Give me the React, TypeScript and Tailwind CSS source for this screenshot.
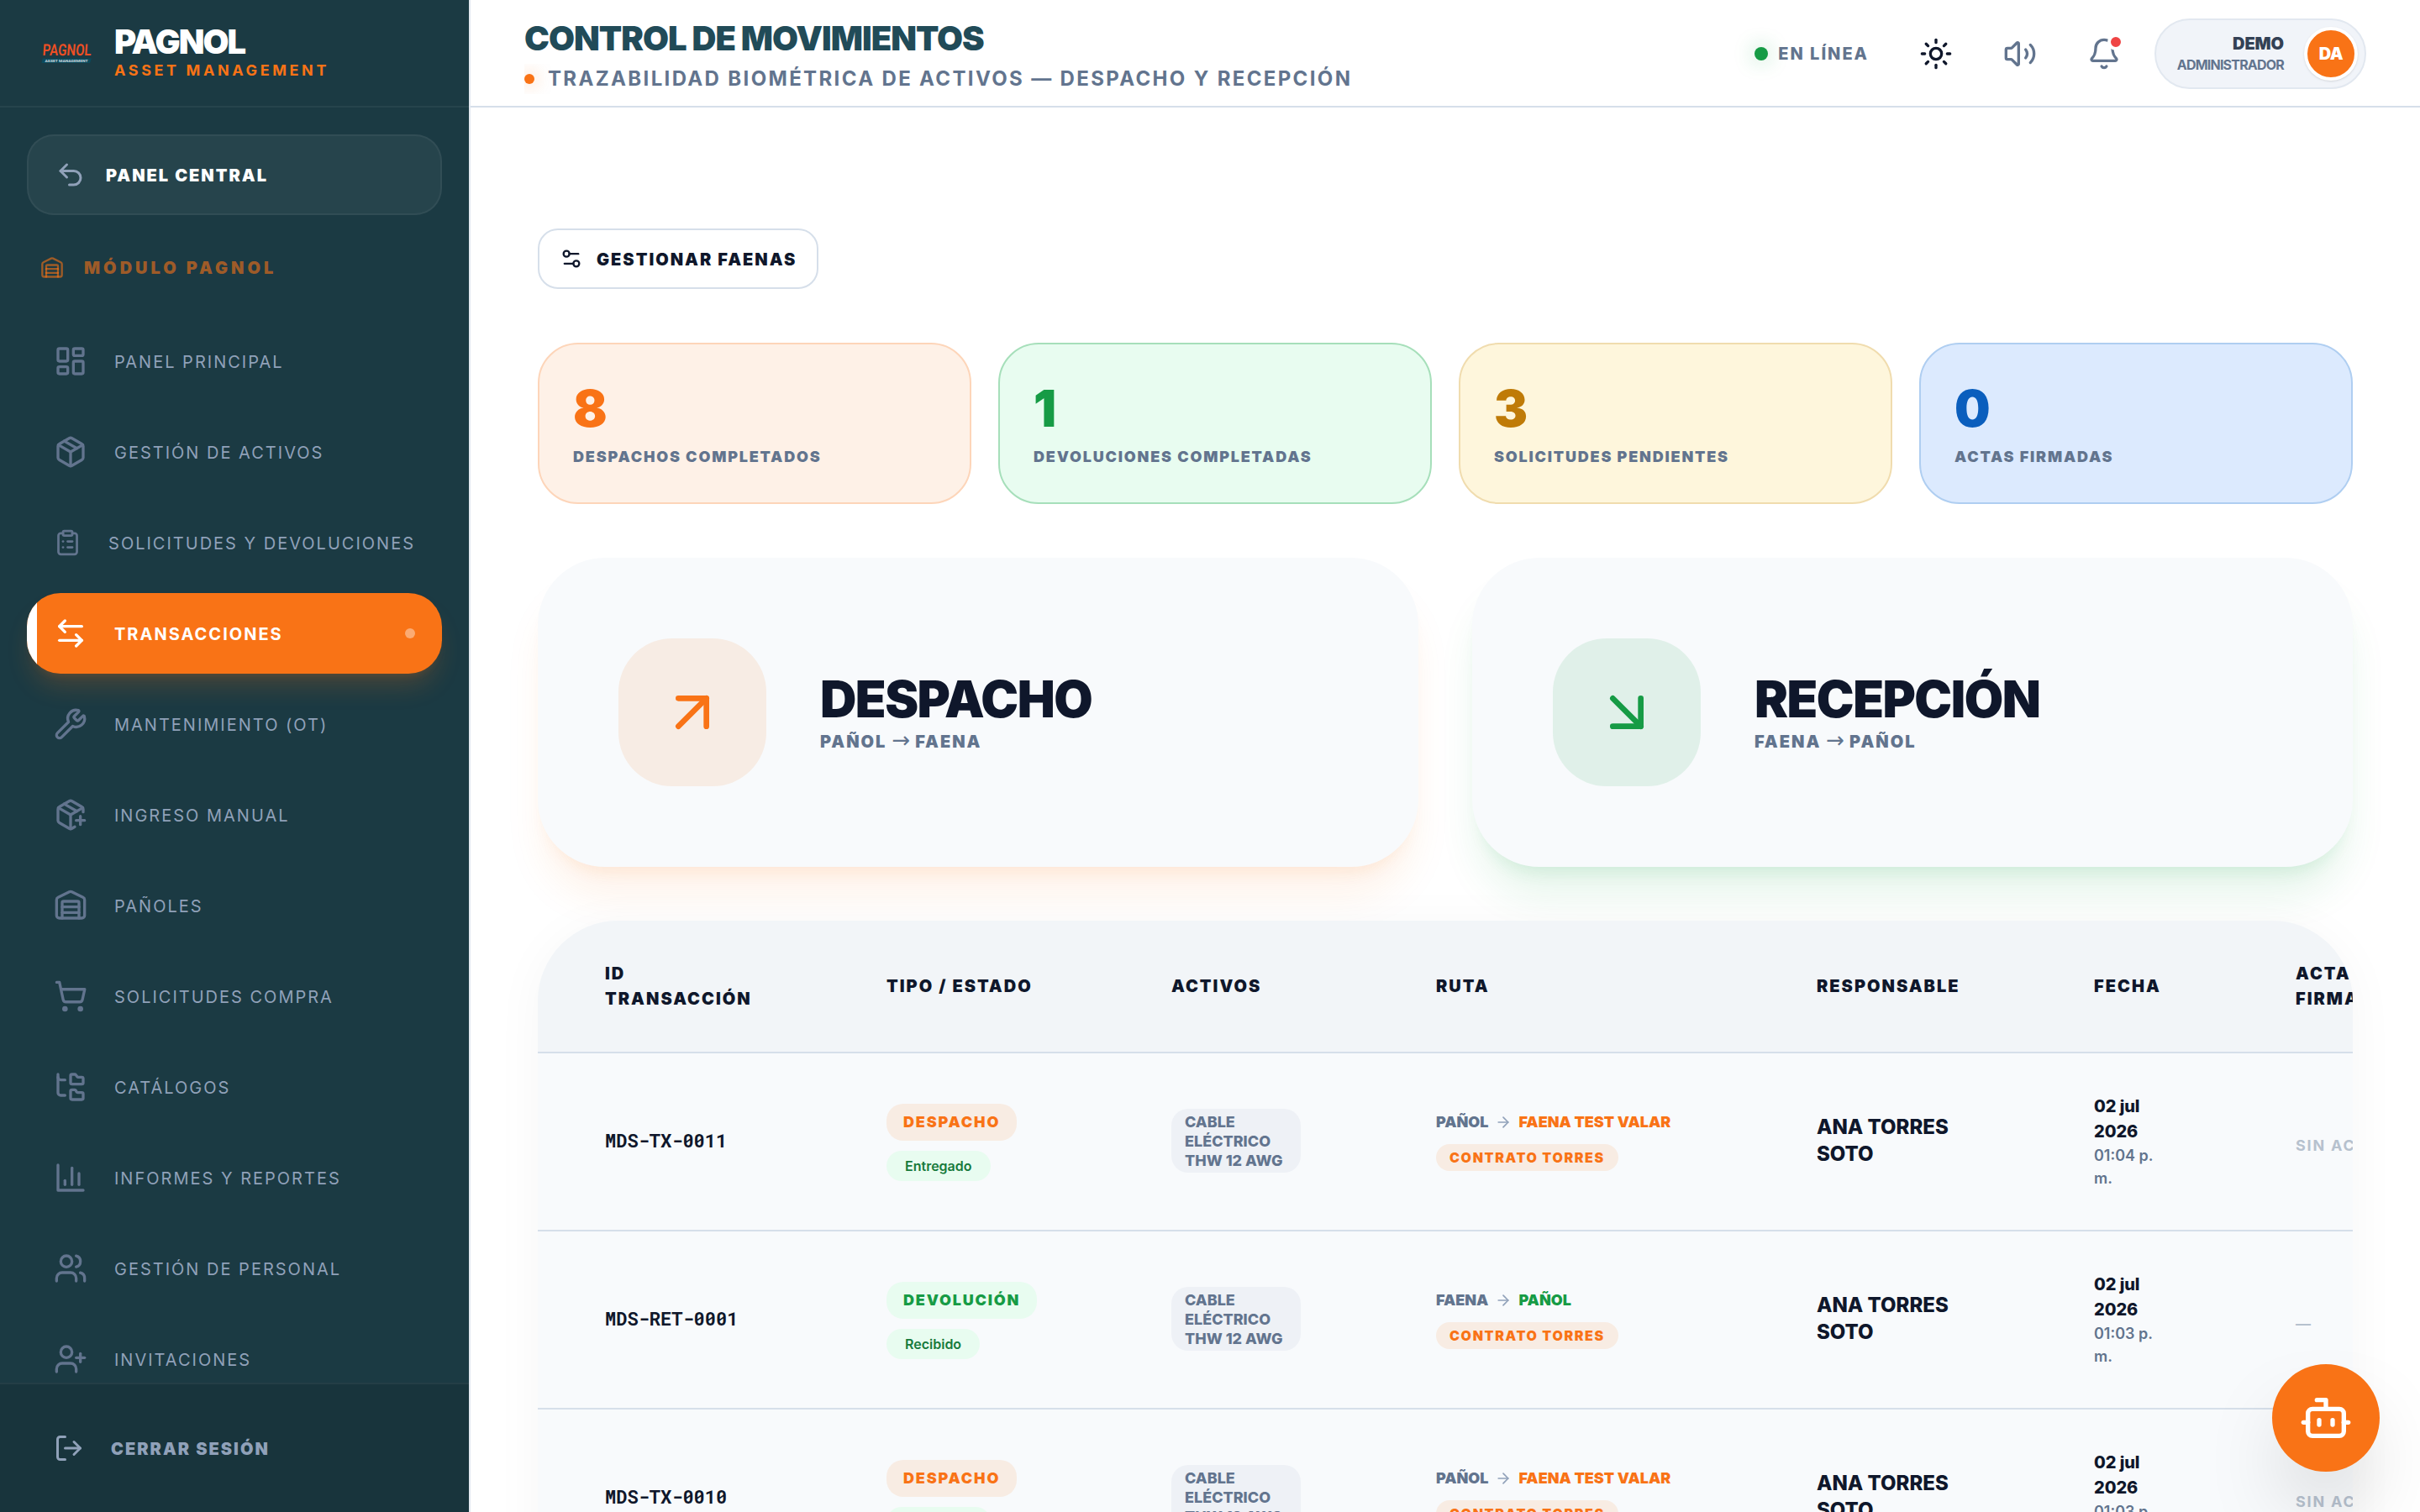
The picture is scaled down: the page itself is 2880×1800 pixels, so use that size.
import type { ComponentType, ReactNode } from 'react';
import {
  ArrowDownRight,
  ArrowRight,
  ArrowUpRight,
  Bell,
  Bot,
  ClipboardList,
  FolderTree,
  LayoutDashboard,
  LogOut,
  Package,
  PackagePlus,
  Settings2,
  ShoppingCart,
  Sun,
  Undo2,
  UserPlus,
  Users,
  Volume2,
  Warehouse,
  Wrench,
} from 'lucide-react';

type IconType = ComponentType<{ className?: string }>;

function BarsIcon({ className }: { className?: string }) {
  return (
    <svg
      viewBox="0 0 24 24"
      fill="none"
      stroke="currentColor"
      strokeWidth={2}
      strokeLinecap="round"
      strokeLinejoin="round"
      className={className}
    >
      <path d="M3 3v18h18" />
      <path d="M18 17V9" />
      <path d="M13 17V5" />
      <path d="M8 17v-3" />
    </svg>
  );
}

function SwapIcon({ className }: { className?: string }) {
  return (
    <svg
      viewBox="0 0 24 24"
      fill="none"
      stroke="currentColor"
      strokeWidth={2}
      strokeLinecap="round"
      strokeLinejoin="round"
      className={className}
    >
      <path d="M8 3 4 7l4 4" />
      <path d="M4 7h16" />
      <path d="m16 21 4-4-4-4" />
      <path d="M20 17H4" />
    </svg>
  );
}

function Logo() {
  return (
    <svg viewBox="0 0 64 32" className="h-8 w-16">
      <text
        x="2.5"
        y="18.5"
        textLength="58"
        lengthAdjust="spacingAndGlyphs"
        transform="skewX(-4) translate(1 0)"
        className="fill-[#ee4f24] font-['Roboto'] text-[19px] font-semibold"
      >
        PAGNOL
      </text>
      <path d="M2.5 21.5H61l-2 5.5H1.5z" className="fill-[#0b4a5c]" />
      <text
        x="5.5"
        y="25.8"
        textLength="51"
        lengthAdjust="spacingAndGlyphs"
        className="fill-[#cfdde1] font-['Roboto'] text-[4.4px] font-bold"
      >
        ASSET MANAGEMENT
      </text>
    </svg>
  );
}

const navItems: { label: string; icon: IconType; active?: boolean }[] = [
  { label: 'PANEL PRINCIPAL', icon: LayoutDashboard },
  { label: 'GESTIÓN DE ACTIVOS', icon: Package },
  { label: 'SOLICITUDES Y DEVOLUCIONES', icon: ClipboardList },
  { label: 'TRANSACCIONES', icon: SwapIcon, active: true },
  { label: 'MANTENIMIENTO (OT)', icon: Wrench },
  { label: 'INGRESO MANUAL', icon: PackagePlus },
  { label: 'PAÑOLES', icon: Warehouse },
  { label: 'SOLICITUDES COMPRA', icon: ShoppingCart },
  { label: 'CATÁLOGOS', icon: FolderTree },
  { label: 'INFORMES Y REPORTES', icon: BarsIcon },
  { label: 'GESTIÓN DE PERSONAL', icon: Users },
  { label: 'INVITACIONES', icon: UserPlus },
];

const stats = [
  { value: 8, label: 'DESPACHOS COMPLETADOS', box: 'bg-[#fef1e7] border-[#fdd5b9]', text: 'text-[#f97316]' },
  { value: 1, label: 'DEVOLUCIONES COMPLETADAS', box: 'bg-[#e8fcf0] border-[#a6dfba]', text: 'text-[#169b45]' },
  { value: 3, label: 'SOLICITUDES PENDIENTES', box: 'bg-[#fef6dc] border-[#f0dcae]', text: 'text-[#bf7b08]' },
  { value: 0, label: 'ACTAS FIRMADAS', box: 'bg-[#dceafe] border-[#afcef1]', text: 'text-[#0a5ebd]' },
];

const headers = [
  { label: 'ID TRANSACCIÓN', width: 'w-[335px]' },
  { label: 'TIPO / ESTADO', width: 'w-[339px]' },
  { label: 'ACTIVOS', width: 'w-[315px]' },
  { label: 'RUTA', width: 'w-[453px]' },
  { label: 'RESPONSABLE', width: 'w-[330px]' },
  { label: 'FECHA', width: 'w-[240px]' },
  { label: 'ACTA FIRMADA', width: 'w-[280px]' },
];

const rows = [
  { id: 'MDS-TX-0011', type: 'DESPACHO', state: 'Entregado', time: '01:04 p. m.', acta: 'SIN ACTA' },
  { id: 'MDS-RET-0001', type: 'DEVOLUCIÓN', state: 'Recibido', time: '01:03 p. m.', acta: '—' },
  { id: 'MDS-TX-0010', type: 'DESPACHO', state: 'Entregado', time: '01:03 p. m.', acta: 'SIN ACTA' },
];

function Sidebar() {
  return (
    <aside className="flex h-full w-[560px] shrink-0 flex-col border-r-2 border-[#e2e8f0] bg-[#1b3a43]">
      <div className="flex h-32 shrink-0 items-center gap-6 border-b-2 border-white/5 pt-0.5 pl-12">
        <Logo />
        <div className="flex flex-col">
          <span className="text-[40px] leading-10 font-black tracking-[-0.05em] text-white">PAGNOL</span>
          <span className="text-[18px] leading-7 font-bold tracking-[0.2em] text-[#f97316]">ASSET MANAGEMENT</span>
        </div>
      </div>

      <nav className="flex min-h-0 flex-1 flex-col overflow-hidden px-8 pt-8">
        <button className="flex h-24 shrink-0 items-center gap-6 rounded-[32px] border-2 border-white/5 bg-white/5 px-8 text-white">
          <Undo2 className="size-9 text-slate-400" />
          <span className="pt-px text-[20px] font-black tracking-[0.1em]">PANEL CENTRAL</span>
        </button>

        <div className="flex h-[126px] shrink-0 items-center gap-6 pl-4 text-[#f97316]/60">
          <Warehouse className="size-7" />
          <span className="text-[20px] font-black tracking-[0.2em]">MÓDULO PAGNOL</span>
        </div>

        <div className="flex flex-col gap-3">
          {navItems.map(({ label, icon: Icon, active }) => (
            <button
              key={label}
              className={
                active
                  ? 'relative flex h-24 shrink-0 items-center gap-8 overflow-hidden rounded-[40px] bg-[#f97316] px-8 text-white shadow-[0_20px_30px_-6px_rgba(249,115,22,0.2),0_8px_12px_-8px_rgba(249,115,22,0.2)]'
                  : 'flex h-24 shrink-0 items-center gap-8 px-8 text-slate-400'
              }
            >
              {active && <span className="absolute inset-y-0 left-0 w-3 bg-white" />}
              <Icon className={active ? 'size-10' : 'size-10 text-slate-500'} />
              <span
                className={
                  active
                    ? 'pt-0.5 text-[20px] font-bold tracking-[0.1em] whitespace-nowrap'
                    : 'pt-0.5 text-[20px] font-normal tracking-[0.1em] whitespace-nowrap'
                }
              >
                {label}
              </span>
              {active && <span className="ml-auto size-3 rounded-full bg-white/40" />}
            </button>
          ))}
        </div>
      </nav>

      <div className="flex h-[154px] shrink-0 items-center gap-8 border-t-2 border-white/5 bg-black/10 px-16 text-slate-400">
        <LogOut className="size-9" />
        <span className="pt-px text-[20px] font-black tracking-[0.1em]">CERRAR SESIÓN</span>
      </div>
    </aside>
  );
}

function HeaderButton({ children }: { children: ReactNode }) {
  return <button className="relative flex size-[100px] items-center justify-center">{children}</button>;
}

function Header() {
  return (
    <header className="flex h-32 shrink-0 items-center justify-between border-b-2 border-[#d6dfea] bg-white px-16 pt-0.5">
      <div className="flex flex-col">
        <h1 className="text-[40px] leading-[60px] font-black tracking-[-0.025em] text-[#214b58]">
          CONTROL DE MOVIMIENTOS
        </h1>
        <div className="flex items-center gap-4 overflow-hidden">
          <span className="size-3 rounded-full bg-[#f97316] shadow-[0_0_20px_rgba(249,115,22,0.5)]" />
          <span className="text-[24px] leading-9 font-bold tracking-[0.098em] text-slate-500">
            TRAZABILIDAD BIOMÉTRICA DE ACTIVOS — DESPACHO Y RECEPCIÓN
          </span>
        </div>
      </div>

      <div className="flex items-center">
        <div className="mr-[30px] flex items-center gap-3">
          <span className="size-4 rounded-full bg-[#169b45] shadow-[0_0_24px_rgba(22,163,74,0.4)]" />
          <span className="text-[20px] font-extrabold tracking-[0.1em] text-slate-500">EN LÍNEA</span>
        </div>
        <HeaderButton>
          <Sun className="size-10 text-slate-900" />
        </HeaderButton>
        <HeaderButton>
          <Volume2 className="size-10 text-slate-500" />
        </HeaderButton>
        <HeaderButton>
          <Bell className="size-10 text-slate-500" />
          <span className="absolute top-[26px] right-[26px] size-5 rounded-full border-4 border-white bg-[#ef4444]" />
        </HeaderButton>
        <div className="ml-2.5 flex w-[252px] items-center justify-end gap-6 rounded-full border-2 border-slate-200 bg-[#f1f4f9] py-2 pr-2">
          <div className="flex flex-col items-end">
            <span className="text-[20px] leading-[25px] font-black tracking-[-0.005em] text-[#334155]">DEMO</span>
            <span className="text-[16px] leading-6 font-bold tracking-[-0.05em] text-slate-500">ADMINISTRADOR</span>
          </div>
          <div className="flex size-16 items-center justify-center rounded-full border-4 border-white bg-[#f97316] text-[20px] font-black tracking-[-0.025em] text-white shadow-sm">
            DA
          </div>
        </div>
      </div>
    </header>
  );
}

function TransactionRow({ row }: { row: (typeof rows)[number] }) {
  const out = row.type === 'DESPACHO';
  return (
    <tr className="h-[212px] border-b-2 border-[#d6dfea]">
      <td className="pb-0.5 pl-20 text-[22px] font-bold text-slate-900">
        <span className="font-['Roboto_Mono','Liberation_Mono',monospace]">{row.id}</span>
      </td>
      <td className="pt-0.5 pl-20">
        <div className="flex flex-col items-start gap-3">
          <span
            className={
              out
                ? 'rounded-[20px] bg-[#f8ece3] px-5 py-2 text-[18px] leading-7 font-black tracking-[0.102em] text-[#f97316]'
                : 'rounded-[20px] bg-[#e8fcf0] px-5 py-2 text-[18px] leading-7 font-black tracking-[0.1em] text-[#169b45]'
            }
          >
            {row.type}
          </span>
          <span className="rounded-full bg-[#e8fcf0] px-[22px] py-1.5 text-[16px] leading-6 font-semibold text-[#177a3c]">
            {row.state}
          </span>
        </div>
      </td>
      <td className="pb-0.5 pl-20">
        <div className="w-[154px] rounded-[20px] bg-[#eef1f6] px-4 pt-1 pb-[3px] text-[18px] leading-[23px] font-extrabold text-slate-500">
          CABLE ELÉCTRICO
          <br />
          THW 12 AWG
        </div>
      </td>
      <td className="pb-0.5 pl-20">
        <div className="flex flex-col items-start gap-3">
          <div className="flex items-center gap-2 text-[18px] leading-7 font-black text-slate-500">
            <span>{out ? 'PAÑOL' : 'FAENA'}</span>
            <ArrowRight className="size-5 text-slate-400" />
            <span className={out ? 'text-[#f97316]' : 'text-[#169b45]'}>{out ? 'FAENA TEST VALAR' : 'PAÑOL'}</span>
          </div>
          <span className="rounded-full bg-[#f8ece3] px-4 py-1 text-[16px] leading-6 font-black tracking-[0.102em] text-[#f97316]">
            CONTRATO TORRES
          </span>
        </div>
      </td>
      <td className="pb-0.5 pl-20">
        <div className="w-[170px] text-[24px] leading-8 font-extrabold text-slate-900">ANA TORRES SOTO</div>
      </td>
      <td className="pl-20">
        <div className="w-[80px]">
          <div className="text-[20px] leading-[30px] font-extrabold tracking-[-0.005em] text-slate-900">
            02 jul 2026
          </div>
          <div className="text-[18px] leading-[27px] font-semibold text-slate-500">{row.time}</div>
        </div>
      </td>
      <td className="pt-2 pl-20 text-[18px] font-bold tracking-[0.1em] whitespace-nowrap text-[#b6c1ce]">{row.acta}</td>
    </tr>
  );
}

export default function App() {
  return (
    <div className="relative flex h-[1800px] w-[2880px] overflow-hidden bg-white font-['Inter',sans-serif]">
      <Sidebar />

      <div className="flex min-w-0 flex-1 flex-col">
        <Header />

        <main className="flex min-h-0 flex-1 flex-col overflow-hidden px-20 pt-36">
          <button className="flex h-[72px] shrink-0 items-center gap-4 self-start rounded-3xl border-2 border-[#d6dfea] bg-white px-6 text-slate-900">
            <Settings2 className="size-7" />
            <span className="pt-px text-[20px] font-black tracking-[0.1em]">GESTIONAR FAENAS</span>
          </button>

          <div className="mt-16 grid shrink-0 grid-cols-4 gap-8">
            {stats.map((stat) => (
              <div key={stat.label} className={`flex h-48 flex-col rounded-[48px] border-2 p-10 ${stat.box}`}>
                <span className={`text-[60px] leading-[72px] font-black ${stat.text}`}>{stat.value}</span>
                <span className="mt-2 text-[18px] leading-7 font-black tracking-[0.1em] text-slate-500">
                  {stat.label}
                </span>
              </div>
            ))}
          </div>

          <div className="mt-16 grid shrink-0 grid-cols-2 gap-16">
            <div className="flex h-[368px] items-center gap-16 rounded-[80px] bg-slate-50 px-24 shadow-[0_40px_50px_-10px_rgba(249,115,22,0.1),0_16px_20px_-12px_rgba(249,115,22,0.1)]">
              <div className="flex size-44 items-center justify-center rounded-[64px] bg-[#f97316]/10 text-[#f97316]">
                <ArrowUpRight className="size-20" />
              </div>
              <div className="flex flex-col">
                <span className="text-[60px] leading-[72px] font-black tracking-[-0.025em] text-slate-900">DESPACHO</span>
                <span className="h-8 text-[20px] leading-[30px] font-black tracking-[0.1em] text-slate-500">
                  PAÑOL <span className="font-['DejaVu_Sans'] text-[26px] leading-none font-normal tracking-normal">→</span> FAENA
                </span>
              </div>
            </div>
            <div className="flex h-[368px] items-center gap-16 rounded-[80px] bg-slate-50 px-24 shadow-[0_40px_50px_-10px_rgba(22,163,74,0.12),0_16px_20px_-12px_rgba(22,163,74,0.12)]">
              <div className="flex size-44 items-center justify-center rounded-[64px] bg-[#169b45]/10 text-[#169b45]">
                <ArrowDownRight className="size-20" />
              </div>
              <div className="flex flex-col">
                <span className="text-[60px] leading-[72px] font-black tracking-[-0.025em] text-slate-900">RECEPCIÓN</span>
                <span className="h-8 text-[20px] leading-[30px] font-black tracking-[0.1em] text-slate-500">
                  FAENA <span className="font-['DejaVu_Sans'] text-[26px] leading-none font-normal tracking-normal">→</span> PAÑOL
                </span>
              </div>
            </div>
          </div>

          <div className="mt-16 h-[1200px] shrink-0 overflow-hidden rounded-[96px] bg-slate-50 shadow-[0_8px_60px_rgba(15,23,42,0.04)]">
            <table className="w-[2292px] table-fixed border-collapse text-left">
              <thead>
                <tr className="h-[157px] border-b-2 border-[#d6dfea] bg-[#f2f5f8]">
                  {headers.map((header) => (
                    <th
                      key={header.label}
                      className={`pl-20 text-[20px] leading-[30px] font-black tracking-[0.1em] text-slate-900 ${header.width}`}
                    >
                      <div className="w-min min-w-0">
                        {header.label === 'TIPO / ESTADO' ? (
                          <span className="whitespace-nowrap">{header.label}</span>
                        ) : (
                          header.label
                        )}
                      </div>
                    </th>
                  ))}
                </tr>
              </thead>
              <tbody>
                {rows.map((row) => (
                  <TransactionRow key={row.id} row={row} />
                ))}
              </tbody>
            </table>
          </div>
        </main>
      </div>

      <button className="absolute right-12 bottom-12 flex size-32 items-center justify-center rounded-full bg-[#f97316] text-white shadow-[0_50px_100px_-24px_rgba(0,0,0,0.25)]">
        <Bot className="size-16" />
      </button>
    </div>
  );
}
